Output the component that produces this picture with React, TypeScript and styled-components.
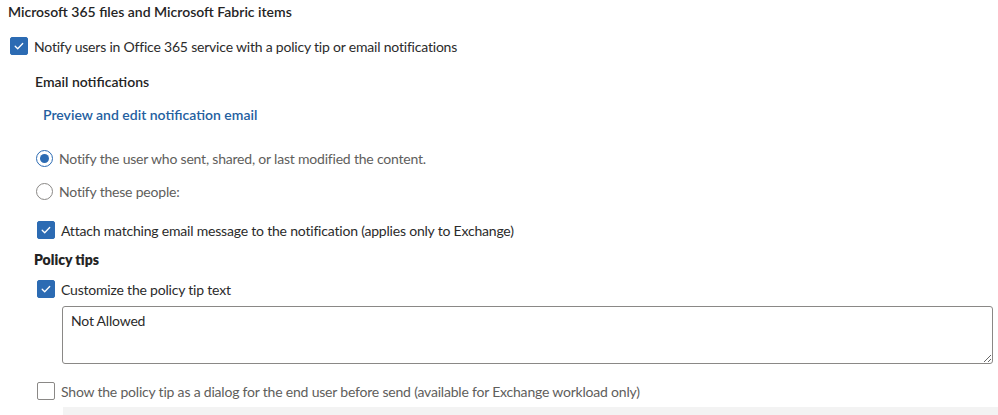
import React from "react";
import styled, { createGlobalStyle } from "styled-components";

const GlobalStyle = createGlobalStyle`
    body{
        margin: 0;
        background: #ffffff;
        font-family: "Segoe UI", Lato, "Noto Sans", sans-serif;
        color: #242424;
    }
`

const Page = styled.div`
    width: 998px;
    height: 415px;
    overflow: hidden;
    display: flex;
    flex-direction: column;
    font-size: 14px;
`

const Title = styled.h2`
    margin: 0 0 0 8px;
    font-size: 14px;
    font-weight: 600;
    line-height: 24px;
`

const Heading = styled.h3<{ $indent: number; $top: number; $weight?: number }>`
    margin: ${p => p.$top}px 0 0 ${p => p.$indent}px;
    font-size: 14px;
    font-weight: ${p => p.$weight ?? 600};
    line-height: 20px;
`

const LinkText = styled.a`
    margin: 13px 0 0 43px;
    font-size: 14px;
    font-weight: 600;
    line-height: 20px;
    color: #24609f;
    text-decoration: none;
    cursor: pointer;
`

const Row = styled.label<{ $indent: number; $top: number; $muted?: boolean }>`
    display: flex;
    align-items: center;
    gap: 6px;
    height: 18px;
    margin: ${p => p.$top}px 0 0 ${p => p.$indent}px;
    color: ${p => (p.$muted ? "#605e5c" : "#2b2b2b")};
    letter-spacing: -0.2px;
    white-space: nowrap;
`

const Box = styled.span<{ $checked: boolean }>`
    box-sizing: border-box;
    width: 18px;
    height: 18px;
    border-radius: 2px;
    flex: none;
    display: flex;
    align-items: center;
    justify-content: center;
    background: ${p => (p.$checked ? "#2c6bb3" : "#ffffff")};
    border: 1px solid ${p => (p.$checked ? "#2c6bb3" : "#8a8886")};
`

const Radio = styled.span<{ $checked: boolean }>`
    box-sizing: border-box;
    width: 17px;
    height: 17px;
    border-radius: 50%;
    flex: none;
    border: 1px solid ${p => (p.$checked ? "#2c6bb3" : "#8a8886")};
    display: flex;
    align-items: center;
    justify-content: center;
    &::after{
        content: "";
        width: 9px;
        height: 9px;
        border-radius: 50%;
        background: ${p => (p.$checked ? "#2c6bb3" : "transparent")};
    }
`

const TipBox = styled.textarea`
    box-sizing: border-box;
    margin: 8px 5px 0 62px;
    height: 58px;
    padding: 5px 8px;
    border: 1px solid #8a8886;
    border-radius: 3px;
    font-family: inherit;
    font-size: 14px;
    letter-spacing: -0.2px;
    color: #2b2b2b;
    resize: vertical;
    outline: none;
`

const Footer = styled.div`
    margin: 7px 0 0 63px;
    height: 8px;
    background: #f3f3f3;
`

const Check = ({ checked }: { checked: boolean }) => (
    <Box $checked={checked}>
        {checked && (
            <svg width="12" height="12" viewBox="0 0 12 12">
                <path d="M2.2 6.3l2.5 2.5 5-5.3" fill="none" stroke="#fff" strokeWidth="1.3" strokeLinecap="round" strokeLinejoin="round"/>
            </svg>
        )}
    </Box>
)

const App = () => {
    return (
        <>
            <GlobalStyle/>
            <Page>
                <Title>Microsoft 365 files and Microsoft Fabric items</Title>
                <Row $indent={10} $top={13}>
                    <Check checked/>
                    Notify users in Office 365 service with a policy tip or email notifications
                </Row>
                <Heading $indent={35} $top={17}>Email notifications</Heading>
                <LinkText>Preview and edit notification email</LinkText>
                <Row $indent={36} $top={24} $muted>
                    <Radio $checked/>
                    Notify the user who sent, shared, or last modified the content.
                </Row>
                <Row $indent={36} $top={15} $muted>
                    <Radio $checked={false}/>
                    Notify these people:
                </Row>
                <Row $indent={37} $top={21}>
                    <Check checked/>
                    Attach matching email message to the notification (applies only to Exchange)
                </Row>
                <Heading $indent={34} $top={11} $weight={800}>Policy tips</Heading>
                <Row $indent={37} $top={10}>
                    <Check checked/>
                    Customize the policy tip text
                </Row>
                <TipBox readOnly defaultValue="Not Allowed"/>
                <Row $indent={37} $top={18} $muted>
                    <Check checked={false}/>
                    Show the policy tip as a dialog for the end user before send (available for Exchange workload only)
                </Row>
                <Footer/>
            </Page>
        </>
    )
}

export default App
